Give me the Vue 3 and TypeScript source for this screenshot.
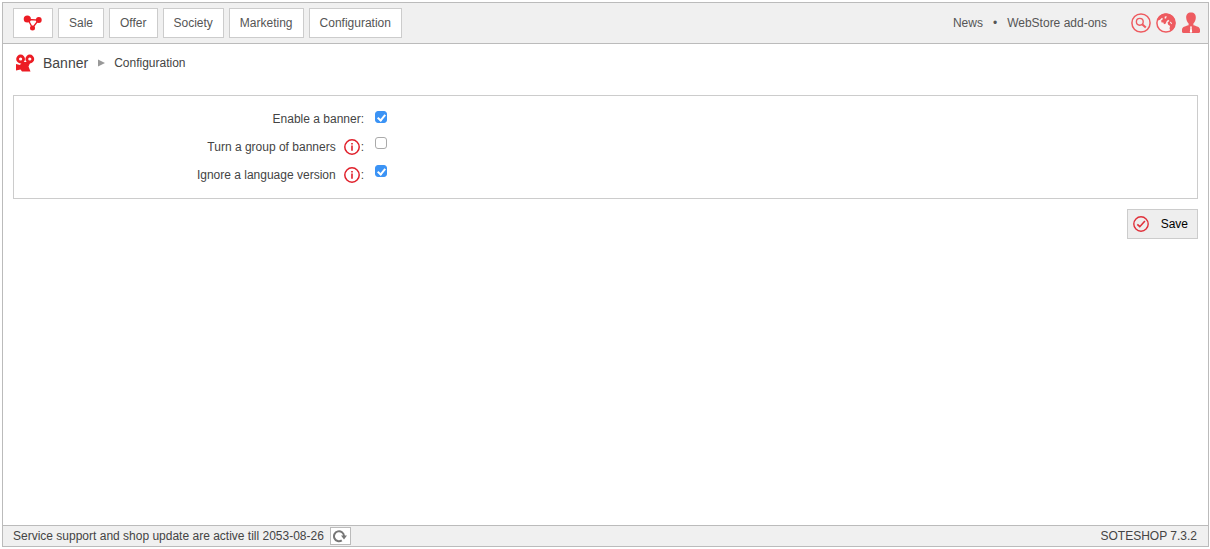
<script setup lang="ts">
import { ref } from 'vue'

interface Option {
  id: string
  label: string
  hint: boolean
  checked: boolean
}

const menu: string[] = ['Sale', 'Offer', 'Society', 'Marketing', 'Configuration']

const options = ref<Option[]>([
  { id: 'enabled', label: 'Enable a banner', hint: false, checked: true },
  { id: 'group', label: 'Turn a group of banners', hint: true, checked: false },
  { id: 'language', label: 'Ignore a language version', hint: true, checked: true },
])
</script>

<template>
  <div class="shell">
    <header class="topbar">
      <nav class="menu">
        <a href="#" class="tab home" aria-label="Dashboard">
          <svg width="20" height="18" viewBox="0 0 20 18">
            <path d="M5 5.5 L15.5 6 L9.5 14 Z" fill="none" stroke="#ec1c24" stroke-width="1.3" />
            <circle cx="4.3" cy="5" r="3.6" fill="#ec1c24" />
            <circle cx="15.8" cy="6" r="2.9" fill="#ec1c24" />
            <circle cx="9.5" cy="14" r="2.5" fill="#ec1c24" />
          </svg>
        </a>
        <a v-for="item in menu" :key="item" href="#" class="tab">{{ item }}</a>
      </nav>
      <div class="tools">
        <a href="#">News</a>
        <span class="dot">•</span>
        <a href="#">WebStore add-ons</a>
        <div class="icons">
          <button type="button" class="icon" aria-label="Search">
            <svg width="20" height="22" viewBox="0 0 20 22" fill="none" stroke="#ee5b60">
              <circle cx="10" cy="11" r="9.1" stroke-width="1.5" />
              <circle cx="8.8" cy="9.8" r="3.4" stroke-width="1.4" />
              <path d="M11.4 12.4 L14.8 15.6" stroke-width="2" />
            </svg>
          </button>
          <button type="button" class="icon" aria-label="Language">
            <svg width="20" height="22" viewBox="0 0 20 22">
              <circle cx="10" cy="11" r="9.1" fill="#f8f4f4" stroke="#ee5b60" stroke-width="1.5" />
              <path d="M1 9 C2 4 6 1.5 10 1.5 C15 1.5 19.3 5.5 19.3 11 C19.3 14.5 17.5 17.5 14.5 19.2 L13.5 16.5 L14 14 L12 12.5 L11.6 10.2 L13.5 9 L12.2 7.8 L10.5 9.5 L9.8 11.5 L8 12.2 L7.2 10.2 L5.8 10.8 L5 8.8 L7 7 L6 5.8 L4 7.8 Z" fill="#ee5b60" />
              <path d="M8.6 4.8 L10.6 4 L10.2 6.2 L8.8 6.8 Z M14.5 9.6 L16 11.2 L15.5 12.2 L14 10.6 Z" fill="#f8f4f4" />
            </svg>
          </button>
          <button type="button" class="icon" aria-label="Account">
            <svg width="20" height="22" viewBox="0 0 20 22" fill="#ee5b60">
              <path d="M10 .5 C13.2 .5 15.1 2.5 14.8 6 C14.6 8.6 13.6 10.3 12.4 11.6 L12.4 13.2 C16 14.2 18.8 15 19 17.5 L19 20 Q18.7 21 17.5 21 L2.5 21 Q1.3 21 1 20 L1 17.5 C1.2 15 4 14.2 7.6 13.2 L7.6 11.6 C6.4 10.3 5.4 8.6 5.2 6 C4.9 2.5 6.8 .5 10 .5 Z" />
              <path d="M9 14.5 L11 14.5 L10.6 16 L11.2 20 L10 21 L8.8 20 L9.4 16 Z" fill="#fff" />
            </svg>
          </button>
        </div>
      </div>
    </header>

    <main class="content">
      <div class="crumbs">
        <svg width="20" height="18" viewBox="0 0 20 18">
          <path d="M1 10 L5 11 L7 8 L15.5 8 L13.5 12.5 L15.5 17.5 L7 17.5 L5.5 15.5 L1 16.5 Z" fill="#ec1c24" />
          <circle cx="5.6" cy="5" r="3" fill="#fff" stroke="#ec1c24" stroke-width="2.8" />
          <circle cx="14.8" cy="5" r="3" fill="#fff" stroke="#ec1c24" stroke-width="2.8" />
        </svg>
        <a href="#" class="module">Banner</a>
        <svg class="arrow" width="7" height="8" viewBox="0 0 7 8"><path d="M0 .5 L7 4 L0 7.5 Z" fill="#999" /></svg>
        <span>Configuration</span>
      </div>

      <form @submit.prevent>
        <div class="panel">
          <div v-for="option in options" :key="option.id" class="row" :class="{ hinted: option.hint }">
            <label :for="option.id" class="caption">
              <span>{{ option.label }}</span>
              <svg v-if="option.hint" class="hint" width="16" height="16" viewBox="0 0 16 16">
                <circle cx="8" cy="8" r="7.2" fill="none" stroke="#e0202b" stroke-width="1.5" />
                <path d="M7.2 4 h1.6 v1.6 h-1.6 Z M7.2 6.6 h1.6 v5.2 h-1.6 Z" fill="#e0202b" />
              </svg>
              <span>:</span>
            </label>
            <input :id="option.id" v-model="option.checked" type="checkbox" />
          </div>
        </div>
        <div class="actions">
          <button type="submit" class="save">
            <svg width="16" height="16" viewBox="0 0 16 16" fill="none" stroke="#e0303a">
              <circle cx="8" cy="8" r="7.2" stroke-width="1.4" />
              <path d="M4.3 8.3 L6.8 10.7 L11.9 5" stroke-width="1.6" />
            </svg>
            <span>Save</span>
          </button>
        </div>
      </form>
    </main>

    <footer class="status">
      <span>Service support and shop update are active till 2053-08-26</span>
      <button type="button" class="refresh" aria-label="Refresh">
        <svg width="14" height="14" viewBox="0 0 14 14">
          <path d="M8.8 11.4 A5 5 0 1 1 11 7" fill="none" stroke="#777" stroke-width="2" />
          <path d="M8 6.6 L14 6.6 L11 10.4 Z" fill="#777" />
        </svg>
      </button>
      <span class="version">SOTESHOP 7.3.2</span>
    </footer>
  </div>
</template>

<style>
body {
  background: #fff;
}
</style>

<style scoped>
.shell {
  box-sizing: border-box;
  display: flex;
  flex-direction: column;
  min-height: calc(100vh - 4px);
  margin: 2px 1px 2px 2px;
  border: 1px solid #bbb;
  color: #444;
  font: 12px/16px "Liberation Sans", Arial, sans-serif;
}

a {
  color: inherit;
  text-decoration: none;
}

button {
  box-sizing: border-box;
  margin: 0;
  padding: 0;
  font: inherit;
  cursor: pointer;
}

svg {
  display: block;
  flex: none;
}

.topbar {
  display: flex;
  align-items: center;
  justify-content: space-between;
  padding: 5px 7px 5px 10px;
  border-bottom: 1px solid #bbb;
  background: #f0f0f0;
  color: #555;
}

.menu {
  display: flex;
  gap: 5px;
}

.tab {
  display: flex;
  align-items: center;
  height: 28px;
  padding: 0 10px;
  border: 1px solid #ccc;
  background: #fff;
}

.home {
  padding: 0 9px;
}

.tools,
.icons {
  display: flex;
  align-items: center;
}

.dot {
  margin: 0 10px;
}

.icons {
  gap: 5px;
  margin-left: 24px;
}

.icon {
  border: 0;
  background: none;
}

.content {
  flex: 1;
  padding: 10px;
}

.crumbs {
  display: flex;
  align-items: center;
  height: 18px;
  padding-left: 2px;
}

.module {
  margin-left: 8px;
  font-size: 14px;
}

.arrow {
  margin: 0 9px 0 10px;
}

.panel {
  margin-top: 23px;
  padding: 9px 0;
  border: 1px solid #ccc;
}

.row {
  display: flex;
  height: 28px;
}

.caption {
  display: flex;
  align-items: center;
  justify-content: flex-end;
  width: 350px;
}

.hint {
  margin: 0 1px 0 8px;
}

input {
  appearance: none;
  box-sizing: border-box;
  width: 12px;
  height: 12px;
  margin: 6px 0 0 11px;
  border: 1px solid #aaa;
  border-radius: 3px;
  background: #fff;
}

.hinted input {
  margin-top: 4px;
}

input:checked {
  display: grid;
  place-items: center;
  border-color: #3b93f5;
  background: #3b93f5;
}

input:checked::after {
  content: "";
  box-sizing: border-box;
  width: 5px;
  height: 8px;
  border: solid #fff;
  border-width: 0 2px 2px 0;
  transform: rotate(40deg);
}

.actions {
  display: flex;
  justify-content: flex-end;
  margin-top: 10px;
}

.save {
  display: flex;
  align-items: center;
  gap: 12px;
  height: 30px;
  padding: 0 9px 0 5px;
  border: 1px solid #ccc;
  background: #eee;
  color: #000;
}

.status {
  display: flex;
  align-items: center;
  height: 20px;
  padding: 0 11px 0 10px;
  border-top: 1px solid #bbb;
  background: #f0f0f0;
}

.refresh {
  display: grid;
  place-items: center;
  width: 21px;
  height: 18px;
  margin-left: 6px;
  border: 1px solid #bbb;
  background: #fff;
}

.version {
  margin-left: auto;
}
</style>
